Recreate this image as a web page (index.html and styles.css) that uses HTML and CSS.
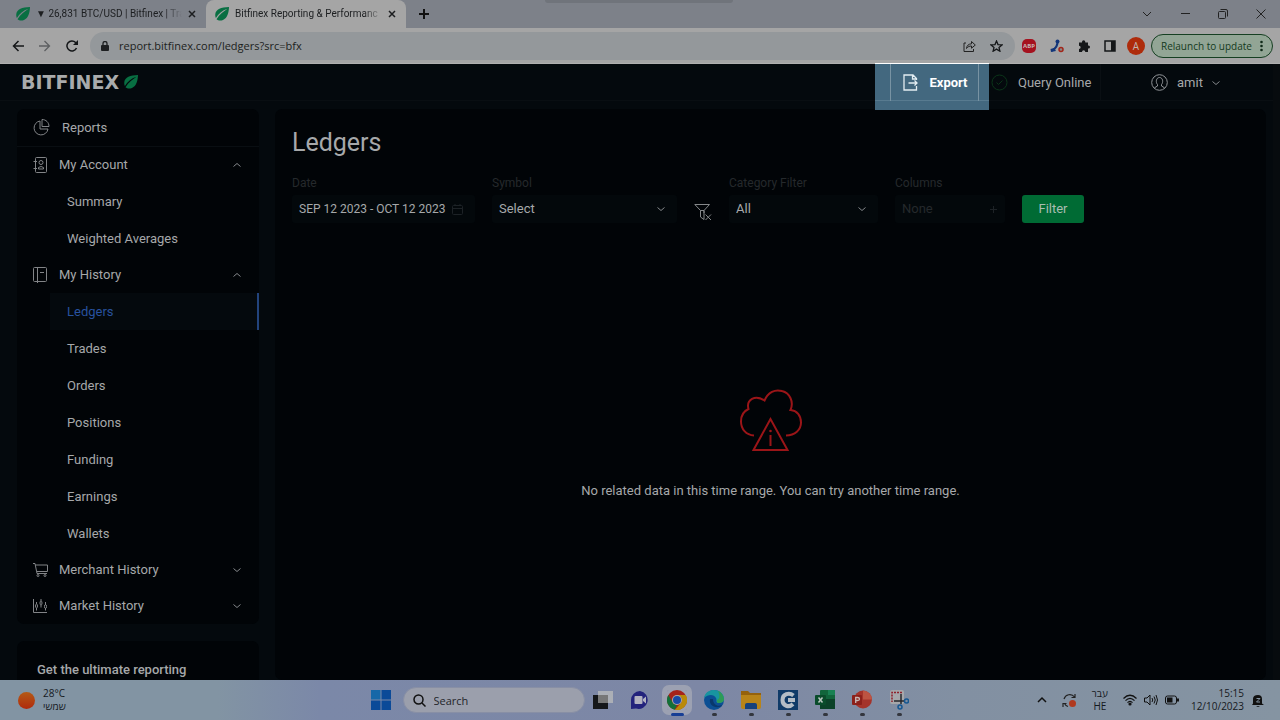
FILE: index.html
```html
<!DOCTYPE html>
<html lang="en">
<head>
    <meta charset="UTF-8">
    <meta name="viewport" content="width=device-width, initial-scale=1.0">
    <title>Bitfinex Reporting &amp; Performance</title>
    <link rel="stylesheet" href="styles.css">
</head>
<body>
    <!-- Shared icons -->
    <svg class="sprite" width="0" height="0" aria-hidden="true">
        <symbol id="leaf" viewBox="0 0 14 14">
            <path fill="#086f42" d="M14 0C6 .2 1 2.300 .3 7C.1 8.700.4 10 .9 11C3.500 6.500 7 3.700 12.500 1.800C9 4 4.500 7.500 1.500 12.200C3 13.600 5.500 14 8 13C12.500 11 13.800 5.500 14 0Z"/>
        </symbol>
        <symbol id="down" viewBox="0 0 8 8"><path fill="none" stroke="#85888b" d="M.5 2.500L4 5.500L7.500 2.500"/></symbol>
        <symbol id="up" viewBox="0 0 8 8"><path fill="none" stroke="#85888b" d="M.5 5.500L4 2.500L7.500 5.500"/></symbol>
        <symbol id="close" viewBox="0 0 8 8"><path fill="none" stroke="currentColor" stroke-width="1.500" d="M1 1L7 7M7 1L1 7"/></symbol>
    </svg>

    <div class="tabs">
        <div class="tab">
            <svg class="favicon"><use href="#leaf"/></svg>
            <span class="tab-title">▼ 26,831 BTC/USD | Bitfinex | Tra</span>
            <button aria-label="Close tab"><svg width="8" height="8"><use href="#close"/></svg></button>
        </div>
        <div class="tab active">
            <svg class="favicon"><use href="#leaf"/></svg>
            <span class="tab-title">Bitfinex Reporting &amp; Performanc</span>
            <button aria-label="Close tab"><svg width="8" height="8"><use href="#close"/></svg></button>
        </div>
        <button class="new-tab" aria-label="New tab"><svg width="10" height="10" fill="none" stroke="#111" stroke-width="2"><path d="M5 0V10M0 5H10"/></svg></button>
        <div class="window-buttons">
            <button aria-label="Search tabs"><svg width="10" height="10" fill="none" stroke="#222"><path d="M1 3L5 7L9 3"/></svg></button>
            <button aria-label="Minimize"><svg width="10" height="10" fill="none" stroke="#222"><path d="M1 4.500H10"/></svg></button>
            <button aria-label="Restore"><svg width="10" height="10" fill="none" stroke="#222"><rect x=".5" y="2.500" width="7" height="7" rx="1"/><path d="M2.500 .500H8Q9.500 .500 9.500 2V7.500"/></svg></button>
            <button aria-label="Close"><svg width="10" height="10" fill="none" stroke="#222"><path d="M.5 .5L9.500 9.500M9.500 .5L.5 9.500"/></svg></button>
        </div>
        <div class="share-bar"></div>
    </div>

    <div class="toolbar">
        <button aria-label="Back"><svg width="12" height="12" fill="none" stroke="#151719" stroke-width="1.500"><path d="M12 6H1.500M6.500 1L1.500 6L6.500 11"/></svg></button>
        <button aria-label="Forward"><svg width="12" height="12" fill="none" stroke="#5d5f61" stroke-width="1.300"><path d="M0 6H10.500M5.500 1L10.500 6L5.500 11"/></svg></button>
        <button aria-label="Reload"><svg width="12" height="12" fill="none" stroke="#151719" stroke-width="1.500"><path d="M10.500 8A5 5 0 1 1 9.600 2.500L11 4"/><path fill="#151719" stroke="none" d="M12 0V5H7Z"/></svg></button>
        <div class="address">
            <svg width="8" height="11"><rect y="4" width="8" height="6" rx="1" fill="#1d1f21"/><path fill="none" stroke="#1d1f21" stroke-width="1.300" d="M2 4V2.500a2 2 0 0 1 4 0V4"/></svg>
            <input type="text" value="report.bitfinex.com/ledgers?src=bfx" aria-label="Address">
            <button aria-label="Share"><svg width="13" height="12" fill="none" stroke="#222"><path d="M3 3H1V11.500H10.500V9M3.500 8.500C3.800 5.500 5.500 4 8.500 3.800V1.500L12.300 5L8.500 8.200V6C6.500 6 5 6.500 3.500 8.500Z"/></svg></button>
            <button aria-label="Bookmark"><svg width="13" height="12" fill="none" stroke="#151719" stroke-width="1.300"><path d="M6.500 1L8 4.600L12 4.900L9 7.400L9.900 11.200L6.500 9.100L3.100 11.200L4 7.400L1 4.900L5 4.600Z"/></svg></button>
        </div>
        <div class="extensions">
            <button class="abp" aria-label="ABP">ABP</button>
            <button aria-label="Phone"><svg width="14" height="14"><path fill="none" stroke="#123579" stroke-width="2" d="M7.500 1.500C8 6 6 9.500 1.500 12"/><circle cx="7.500" cy="2.500" r="2" fill="#123579"/><path fill="#123579" d="M.5 10L4 9L6 12L1 13Z"/><circle cx="11" cy="10.500" r="2" fill="#888" stroke="#a22519" stroke-width="1.500"/></svg></button>
            <button aria-label="Extensions"><svg width="12" height="12" fill="#151719"><path d="M1 2.500H4V2a1.500 1.500 0 0 1 3.300 0V2.500H10V5.500H10.500a1.500 1.500 0 0 1 0 3H10V12H7.300A1.600 1.600 0 0 0 4 12H1V9A1.600 1.600 0 0 0 1 5.700Z"/></svg></button>
            <button aria-label="Side panel"><svg width="12" height="12"><rect x="1" y="1" width="10" height="10" fill="none" stroke="#151719" stroke-width="1.500"/><path fill="#151719" d="M7 1H11V11H7Z"/></svg></button>
            <button class="avatar" aria-label="Profile">A</button>
        </div>
        <button class="relaunch">Relaunch to update
            <svg width="3" height="12" fill="#102a18"><circle cx="1.500" cy="2" r="1.300"/><circle cx="1.500" cy="6" r="1.300"/><circle cx="1.500" cy="10" r="1.300"/></svg>
        </button>
    </div>

    <div class="app">
        <header>
            <a href="#" class="logo">BITFINEX<svg width="14" height="14"><use href="#leaf"/></svg></a>
            <div class="export">
                <button>
                    <svg width="15" height="17" fill="none" stroke="#e4edf2" stroke-width="1.300"><path d="M13.500 6V4.500L10 1H1V16H13.500V12M9.500 1V5H13.500M5.500 9H14M11.500 6.500L14 9L11.500 11.500"/></svg>
                    Export
                </button>
            </div>
            <div class="query">
                <svg width="17" height="17" fill="none" stroke="#0b3519"><circle cx="8.500" cy="8.500" r="7.500"/><path d="M5.500 8.500L7.500 10.500L11.500 6.500"/></svg>
                Query Online
            </div>
            <button class="user">
                <svg width="17" height="17" fill="none" stroke="#929599"><circle cx="8.500" cy="8.500" r="7.800"/><path d="M6.500 10.500C4.500 8.500 5 3.500 8.500 3.500S12.500 8.500 10.500 10.500V12L13.500 13.800M6.500 10.500V12L3.500 13.800"/></svg>
                amit
                <svg width="8" height="8"><use href="#down"/></svg>
            </button>
        </header>

        <div class="content">
            <aside>
                <nav class="card">
                    <a href="#" class="reports">
                        <svg width="17" height="17" fill="none" stroke="#828487"><path d="M7 2A7 7 0 1 0 15 10H7ZM9 .5V7.500H16C16 3.500 13 .5 9 .5Z"/></svg>
                        Reports
                    </a>
                    <button class="group">
                        <svg width="16" height="16" fill="none" stroke="#828487"><rect x="2.500" y=".5" width="11" height="15" rx="1"/><path d="M.5 4.500H4M.5 11.500H4M5.500 12V10.500Q8 8.500 10.500 10.500V12Z"/><circle cx="8" cy="5.500" r="2"/></svg>
                        My Account
                        <svg width="8" height="8"><use href="#up"/></svg>
                    </button>
                    <a href="#">Summary</a>
                    <a href="#">Weighted Averages</a>
                    <button class="group">
                        <svg width="16" height="16" fill="none" stroke="#828487"><rect x=".5" y=".5" width="13" height="14" rx="1"/><path d="M4.500 .5V16M7 5.500H11"/></svg>
                        My History
                        <svg width="8" height="8"><use href="#up"/></svg>
                    </button>
                    <a href="#" class="current">Ledgers</a>
                    <a href="#">Trades</a>
                    <a href="#">Orders</a>
                    <a href="#">Positions</a>
                    <a href="#">Funding</a>
                    <a href="#">Earnings</a>
                    <a href="#">Wallets</a>
                    <button class="group">
                        <svg width="16" height="16" fill="none" stroke="#828487"><path d="M0 1.500H2L4 11.500H14M2.300 3H14.500V9.500H3.700"/><circle cx="5" cy="13.500" r="1"/><circle cx="12" cy="13.500" r="1"/></svg>
                        Merchant History
                        <svg width="8" height="8"><use href="#down"/></svg>
                    </button>
                    <button class="group">
                        <svg width="16" height="16" fill="none" stroke="#828487"><path d="M.5 1V14.500H14M3.500 4V6M3.500 10V12.500M8 1V3M8 7V9.500M12.500 4V7M12.500 10V12.500"/><ellipse cx="3.500" cy="8" rx="1" ry="2"/><ellipse cx="8" cy="5" rx="1" ry="2"/><ellipse cx="12.500" cy="8.500" rx="1" ry="2"/></svg>
                        Market History
                        <svg width="8" height="8"><use href="#down"/></svg>
                    </button>
                </nav>
                <section class="card promo">
                    <h2>Get the ultimate reporting</h2>
                </section>
            </aside>

            <main class="card">
                <h1>Ledgers</h1>
                <form class="filters">
                    <div class="field date">
                        <label for="date">Date</label>
                        <div class="control">
                            <input type="text" id="date" value="SEP 12 2023 - OCT 12 2023">
                            <svg width="11" height="11" fill="none" stroke="#1d2226"><rect x=".5" y="1.500" width="10" height="9" rx="1"/><path d="M.5 4.500H10.500M3 0V2M8 0V2"/></svg>
                        </div>
                    </div>
                    <div class="field symbol">
                        <label for="symbol">Symbol</label>
                        <div class="control">
                            <select id="symbol"><option>Select</option></select>
                            <svg width="8" height="8"><use href="#down"/></svg>
                        </div>
                    </div>
                    <button type="button" class="clear" aria-label="Clear filters">
                        <svg width="18" height="18" fill="none" stroke="#85888a"><path d="M.8 1.500H15.500L10 7.500V10M.8 1.500L6.500 7.500V14L10 16.500V7.500H6.500M11.500 11.500L17 17M17 11.500L11.500 17"/></svg>
                    </button>
                    <div class="field category">
                        <label for="category">Category Filter</label>
                        <div class="control">
                            <select id="category"><option>All</option></select>
                            <svg width="8" height="8"><use href="#down"/></svg>
                        </div>
                    </div>
                    <div class="field columns">
                        <label for="columns">Columns</label>
                        <div class="control">
                            <input type="text" id="columns" placeholder="None">
                            <svg width="7" height="7" fill="none" stroke="#1d2226"><path d="M3.500 0V7M0 3.500H7"/></svg>
                        </div>
                    </div>
                    <button type="button" class="filter-button">Filter</button>
                </form>
                <div class="empty">
                    <svg width="64" height="64" fill="none" stroke="#9a1518" stroke-width="2"><path d="M15 46.500C7 46 2 40 2 32.500C2 26 5 22 9.500 20C7 11 16 5 25.500 11.500C29 3 36 0 43 2C51 4 55 13 51.500 21C58 21.500 62 26.500 62 33.500C62 41 56 46.500 47 46.500M31.500 30L14.500 61H48.500ZM31.500 46V57"/><circle cx="31.500" cy="42" r="1.300" fill="#9a1518" stroke="none"/></svg>
                    <p>No related data in this time range. You can try another time range.</p>
                </div>
            </main>
        </div>
    </div>

    <footer class="taskbar">
        <div class="weather">
            <span class="sun"></span>
            <p>28°C<br><span lang="he" dir="rtl">שמשי</span></p>
        </div>
        <div class="dock">
            <button class="slot" aria-label="Start"><svg width="20" height="20" fill="#0b4a98"><path fill="#1668a8" d="M0 0H9.500V9.500H0Z"/><path d="M10.500 0H20V9.500H10.500ZM0 10.500H9.500V20H0ZM10.500 10.500H20V20H10.500Z"/></svg></button>
            <label class="search">
                <svg width="13" height="13" fill="none" stroke="#111" stroke-width="1.500"><circle cx="5.500" cy="5.500" r="4.500"/><path d="M9 9L12.500 12.500"/></svg>
                <input type="text" placeholder="Search" aria-label="Search">
            </label>
            <button class="slot" aria-label="Task view"><svg width="20" height="20"><rect y="5" width="15" height="14" fill="#15171a"/><rect x="5" y="1" width="15" height="12" fill="#b4b6b8" opacity=".85"/><rect x="5" y="5" width="10" height="8" fill="#777"/></svg></button>
            <button class="slot" aria-label="Chat"><svg width="20" height="20"><path fill="#23237c" d="M10 1A9 9 0 1 1 6 18.500L1 19V10A9 9 0 0 1 10 1Z"/><rect x="4.500" y="6" width="8" height="8" rx="1" fill="#b3b3c0"/><path fill="#b3b3c0" d="M13 9L16 6.500V13.500L13 11Z"/></svg></button>
            <button class="slot open front" aria-label="Chrome"><svg width="20" height="20"><circle cx="10" cy="10" r="10" fill="#a6231b"/><path fill="#137039" d="M1.300 5L5.700 12.500A5 5 0 0 0 10 15L7.800 19.800A10 10 0 0 1 1.300 5Z"/><path fill="#b98a08" d="M10 5H18.700A10 10 0 0 1 8 19.800L14.300 12.500A5 5 0 0 0 14 7Z"/><circle cx="10" cy="10" r="5" fill="#aaa"/><circle cx="10" cy="10" r="4" fill="#164aa8"/></svg></button>
            <button class="slot open" aria-label="Edge"><svg width="20" height="20"><circle cx="10" cy="10" r="10" fill="#0c4f94"/><path fill="#1894a0" d="M0 8C1 2 6 0 10 0C16 0 20 4 20 9C20 12 17 13.500 14 13C11.500 12.500 13 10 12 8C10 4 4 4 0 8Z"/><path fill="#2e9b56" d="M14 1A10 10 0 0 1 20 9C20 12 17 13.500 14 13C12.500 12.500 13 11.500 13 10C16 9 16 5 14 1Z"/><path fill="#09386c" d="M6 9C5 14 9 18 15 17C18 16.500 18 15 18 15C14 17 9 15 9 9Z"/></svg></button>
            <button class="slot open" aria-label="File Explorer"><svg width="20" height="20"><path fill="#95620d" d="M0 1H7L9 3H20V8H0Z"/><path fill="#b88419" d="M0 5H20V17Q20 19 18 19H2Q0 19 0 17Z"/><path fill="#16417c" d="M4 19V15Q4 13 6 13H14Q16 13 16 15V19Z"/></svg></button>
            <button class="slot open" aria-label="Greenshot"><svg width="20" height="20"><rect width="20" height="20" fill="#103b68"/><path fill="none" stroke="#b4bdc6" stroke-width="4" d="M15.500 5.500C11 2 4.500 4 4.500 10S11 18 15 14M17 10H10"/></svg></button>
            <button class="slot open" aria-label="Excel"><svg width="20" height="20"><rect x="5" width="15" height="19" rx="1" fill="#11653b"/><path fill="#0b4228" d="M5 9H20V19H5Z"/><path fill="#198153" d="M13 0H20V5H13Z"/><rect y="5" width="11" height="10" rx="1" fill="#0a4c2b"/><path fill="none" stroke="#b9c5bf" stroke-width="1.500" d="M3.500 7.500L7.500 12.500M7.500 7.500L3.500 12.500"/></svg></button>
            <button class="slot open" aria-label="PowerPoint"><svg width="20" height="20"><circle cx="11" cy="9.500" r="9" fill="#a4332a"/><path fill="#bd5442" d="M11 .5A9 9 0 0 1 20 9.500H11Z"/><rect y="5" width="10" height="10" rx="1" fill="#8c201a"/><path fill="none" stroke="#c8b8b4" stroke-width="1.300" d="M3.700 13V7.500H5.500Q7.500 7.500 7.500 9T5.500 10.500H4"/></svg></button>
            <button class="slot open" aria-label="Snipping Tool"><svg width="20" height="20"><rect x="1" width="14" height="14" rx="2" fill="#a6a7aa"/><path fill="none" stroke="#8f222c" stroke-width="1.500" stroke-dasharray="2 1" d="M13 2.500H3V12"/><path fill="none" stroke="#27282c" stroke-width="1.500" d="M5 11H15M12 4V14"/><g fill="none" stroke="#155791" stroke-width="1.500"><circle cx="17.500" cy="11" r="2"/><circle cx="11" cy="17" r="2"/></g></svg></button>
        </div>
        <div class="tray">
            <svg width="10" height="8" fill="none" stroke="#111" stroke-width="1.500"><path d="M1 6L5 2L9 6"/></svg>
            <svg width="15" height="15" fill="none" stroke="#222" stroke-width="1.200"><path d="M2 6A6 6 0 0 1 12.500 4M13 1V4.500H9.500M6 13.500A6 6 0 0 1 2.500 10.500M1 14V10.500H4.500"/><circle cx="10.500" cy="10.500" r="3.500" fill="#b0391e" stroke="none"/></svg>
            <p class="lang"><span lang="he">עבר</span><br>HE</p>
            <div class="status">
                <svg width="14" height="12" fill="none" stroke="#111" stroke-width="1.200"><path d="M.5 4.500Q7 -2 13.500 4.500M2.500 6.700Q7 2 11.500 6.700M4.500 8.700Q7 6 9.500 8.700"/><circle cx="7" cy="10" r="1" fill="#111"/></svg>
                <svg width="14" height="12" fill="none" stroke="#111"><path d="M.5 4V8H3L6 11V1L3 4ZM8 4Q9.500 6 8 8M10 2.500Q12.500 6 10 9.500M12 1Q15 6 12 11"/></svg>
                <svg width="14" height="12" fill="none" stroke="#111"><rect x=".5" y="2" width="11" height="8" rx="2"/><rect x="2" y="3.500" width="5.500" height="5" fill="#111" stroke="none"/><path stroke-width="2" d="M13 4.500V7.500"/></svg>
            </div>
            <p class="clock">15:15<br>12/10/2023</p>
            <svg width="12" height="13" fill="#111"><path d="M1 9.500V5Q1 1 6 1Q10 1 10 5V9.500L12 11H0ZM4 12H8L6 13Z"/><path fill="none" stroke="#8594a2" d="M4.500 4.500H8L4.500 8H8"/></svg>
        </div>
    </footer>
</body>
</html>
```
FILE: styles.css
```css
* {
    margin: 0;
    padding: 0;
    box-sizing: border-box;
}
body {
    height: 100vh;
    display: flex;
    flex-direction: column;
    overflow: hidden;
    background-color: #04090d;
    color: #a6a8aa;
    font-family: Roboto, sans-serif;
    font-size: 13px;
    line-height: 16px;
}
button, input, select {
    background: none;
    border: none;
    outline: none;
    color: inherit;
    font: inherit;
}
a {
    color: inherit;
    text-decoration: none;
}
svg {
    flex-shrink: 0;
    display: block;
}
.sprite {
    position: absolute;
}

/* Browser */
.tabs {
    position: relative;
    flex-shrink: 0;
    display: flex;
    height: 28px;
    background-color: #7d8189;
    color: #1c1e20;
    font-size: 10px;
}
.tab {
    display: flex;
    align-items: center;
    width: 200px;
    padding: 0 9px;
    gap: 6px;
}
.tab:first-child {
    width: 206px;
    padding-left: 16px;
}
.tab.active {
    background-color: #a5a5a5;
    border-radius: 8px 8px 0 0;
}
.tab button {
    width: 9px;
}
.favicon {
    width: 14px;
    height: 14px;
}
.tab-title {
    flex: 1;
    min-width: 0;
    white-space: nowrap;
    mask-image: linear-gradient(to right, #000 88%, transparent);
}
.new-tab {
    padding: 0 13px;
}
.window-buttons {
    display: flex;
    margin-left: auto;
    padding-right: 14px;
    gap: 28px;
}
.share-bar {
    position: absolute;
    top: 0;
    left: 50%;
    width: 188px;
    height: 3px;
    margin-left: -95px;
    background-color: #70747b;
    border-radius: 0 0 4px 4px;
}
.toolbar {
    flex-shrink: 0;
    display: flex;
    align-items: center;
    height: 36px;
    padding: 1px 7px 0 12px;
    gap: 15px;
    background-color: #a5a5a5;
    border-bottom: 1px solid #b0b0b0;
    color: #1c1e20;
    font-family: "Open Sans", sans-serif;
    font-size: 11px;
}
.address {
    flex: 1;
    display: flex;
    align-items: center;
    height: 28px;
    margin-left: -3px;
    padding: 0 12px 0 11px;
    gap: 10px;
    background-color: #94989b;
    border-radius: 14px;
}
.address input {
    flex: 1;
}
.address button + button {
    margin-left: 4px;
}
.extensions {
    display: flex;
    align-items: center;
    gap: 14px;
    margin-left: -8px;
}
.abp {
    width: 14px;
    height: 14px;
    background-color: #a5121f;
    border-radius: 5px;
    color: #c5b5b5;
    font-size: 6px;
    font-weight: bold;
    line-height: 14px;
}
.avatar {
    width: 18px;
    height: 18px;
    margin-left: -3px;
    background-color: #ae2b0b;
    border-radius: 50%;
    color: #c0b5b0;
    font-size: 10px;
}
.relaunch {
    display: flex;
    align-items: center;
    justify-content: space-between;
    width: 122px;
    height: 24px;
    margin-left: -9px;
    padding: 0 9px;
    background-color: #92a595;
    border: 1px solid #163f22;
    border-radius: 12px;
    color: #143a20;
    font-size: 10px;
    white-space: nowrap;
}

/* Report app */
.app {
    flex: 1;
    min-height: 0;
    display: flex;
    flex-direction: column;
    border-right: 7px solid #070b0e;
}
header {
    flex-shrink: 0;
    display: flex;
    height: 37px;
    margin-bottom: 8px;
    padding-left: 21px;
    border-bottom: 1px solid #090e12;
}
.logo {
    display: flex;
    align-items: center;
    margin-right: auto;
    gap: 5px;
    color: #a9abac;
    font-family: "DejaVu Sans", sans-serif;
    font-size: 19px;
    font-weight: bold;
}
.export {
    width: 114px;
    height: 46px;
    padding: 0 10px 0 15px;
    background: linear-gradient(#43687f 36px, #587b90 36px, #587b90 37px, #43687f 37px);
    box-shadow: 0 -1px #fff;
    z-index: 1;
}
.export button {
    display: flex;
    align-items: center;
    justify-content: center;
    width: 100%;
    height: 37px;
    padding-left: 2px;
    gap: 11px;
    border: solid #7893a3;
    border-width: 0 1px;
    color: #fff;
    font-weight: bold;
}
.query {
    display: flex;
    align-items: center;
    width: 112px;
    padding: 1px 0 0 2px;
    gap: 10px;
    border-right: 1px solid #0a0f13;
}
.user {
    display: flex;
    align-items: center;
    width: 172px;
    padding: 1px 0 0 50px;
    gap: 9px;
}
.content {
    flex: 1;
    min-height: 0;
    display: flex;
    gap: 16px;
    padding: 0 7px 0 17px;
}
.card {
    background-color: #010407;
    border-radius: 7px;
}
aside {
    display: flex;
    flex-direction: column;
    flex-shrink: 0;
    width: 242px;
    overflow: hidden;
}
nav {
    display: flex;
    flex-direction: column;
}
nav a {
    display: flex;
    align-items: center;
    height: 37px;
    margin-left: 33px;
    padding-left: 17px;
}
nav .reports {
    height: 38px;
    margin-left: 0;
    padding-left: 16px;
    gap: 12px;
    border-bottom: 1px solid #090e12;
}
nav .current {
    background-color: #04090d;
    border-right: 2px solid #22437c;
    color: #28529f;
}
.group {
    display: flex;
    align-items: center;
    height: 36px;
    padding: 0 18px 0 16px;
    gap: 10px;
}
.group svg:last-child {
    margin-left: auto;
}
.promo {
    flex: 1;
    margin-top: 17px;
    padding: 21px 20px 0;
    border-radius: 7px 7px 0 0;
}
h2 {
    font-size: 13px;
    font-weight: 500;
    line-height: 16px;
}
main {
    flex: 1;
    min-width: 0;
    display: flex;
    flex-direction: column;
    padding: 16px 17px 0;
}
h1 {
    font-size: 25px;
    font-weight: normal;
    line-height: 36px;
}
.filters {
    display: flex;
    align-items: flex-end;
    flex-wrap: wrap;
    margin-top: 14px;
    gap: 17px;
}
.field label {
    display: block;
    margin-bottom: 4px;
    color: #25292c;
    font-size: 12px;
}
.control {
    display: flex;
    align-items: center;
    height: 28px;
    padding: 0 12px 0 7px;
    background-color: #03080b;
    border-radius: 3px;
}
.control input, .control select {
    flex: 1;
    min-width: 0;
    appearance: none;
}
.date {
    width: 183px;
}
.date input {
    font-size: 12px;
}
.symbol {
    width: 185px;
}
.category {
    width: 149px;
}
.columns {
    width: 110px;
}
.columns .control {
    padding-right: 8px;
}
.columns input::placeholder {
    color: #25292c;
}
.clear {
    width: 18px;
    height: 22px;
}
.filter-button {
    width: 62px;
    height: 28px;
    background-color: #006b34;
    border-radius: 3px;
    color: #a9bdb1;
}
.empty {
    flex: 1;
    display: flex;
    flex-direction: column;
    align-items: center;
    justify-content: center;
    gap: 30px;
    padding-bottom: 15px;
}

/* Windows taskbar */
.taskbar {
    flex-shrink: 0;
    display: grid;
    grid-template-columns: 1fr auto 1fr;
    height: 40px;
    background: linear-gradient(to right, #8294a3 17%, #7b88a8 25%, #7d87a5 55%, #8290a2 75%, #8594a2);
    color: #15191d;
    font-family: "Open Sans", "DejaVu Sans", sans-serif;
    font-size: 10px;
    line-height: 13px;
}
.weather {
    display: flex;
    align-items: center;
    padding-left: 18px;
    gap: 8px;
}
.sun {
    width: 17px;
    height: 17px;
    background: linear-gradient(#b45a16, #b02a0c);
    border-radius: 50%;
}
.dock {
    display: flex;
    align-items: center;
}
.slot {
    position: relative;
    display: flex;
    align-items: center;
    justify-content: center;
    width: 37px;
    height: 40px;
}
.search {
    display: flex;
    align-items: center;
    width: 182px;
    height: 26px;
    margin-left: 3px;
    padding: 0 9px;
    gap: 8px;
    background-color: #9b9fac;
    border: 1px solid #888fa5;
    border-radius: 13px;
    font-size: 11px;
}
.search input {
    min-width: 0;
}
.search input::placeholder {
    color: #24262a;
}
.open::after {
    content: "";
    position: absolute;
    bottom: 4px;
    width: 5px;
    height: 3px;
    background-color: #33363e;
    border-radius: 2px;
}
.front svg {
    outline: 5px solid #9ca1b2;
    background-color: #9ca1b2;
    border-radius: 2px;
}
.front::after {
    width: 13px;
    background-color: #173e95;
}
.tray {
    display: flex;
    align-items: center;
    justify-content: flex-end;
    padding-right: 16px;
    gap: 15px;
}
.status {
    display: flex;
    gap: 7px;
}
.lang {
    text-align: center;
}
.clock {
    margin-left: -3px;
    text-align: right;
}
.clock + svg {
    margin-left: -7px;
}
```
